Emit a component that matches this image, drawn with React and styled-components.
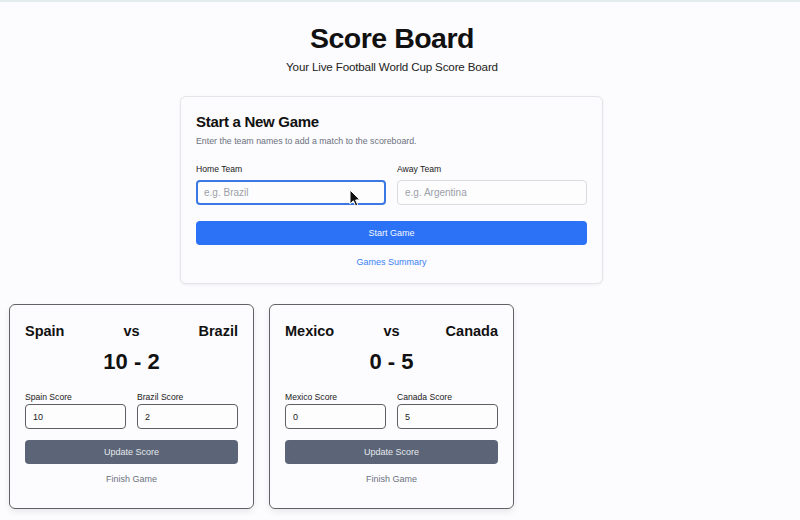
import React, { useState } from "react";
import styled, { createGlobalStyle, css } from "styled-components";

const GlobalStyle = createGlobalStyle`
  html, body {
    margin: 0;
    padding: 0;
    background: #fcfbfd;
  }
  body {
    font-family: "Liberation Sans", Arial, sans-serif;
    color: #111;
  }
  * { box-sizing: border-box; }
`;

const Page = styled.div`
  position: relative;
  width: 800px;
  min-height: 520px;
  border-top: 2px solid #e3eded;
  overflow: hidden;
`;

const Header = styled.header`
  width: 784px;
  display: flex;
  flex-direction: column;
  align-items: center;
  padding-top: 19px;
`;

const Title = styled.h1`
  margin: 0;
  font-size: 28.5px;
  line-height: 34px;
  font-weight: 700;
  letter-spacing: -0.5px;
  color: #111;
`;

const Subtitle = styled.p`
  margin: 5px 0 0;
  font-size: 11.6px;
  line-height: 14px;
  letter-spacing: -0.15px;
  color: #222;
`;

const FormCard = styled.section`
  width: 423px;
  margin: 22px 0 0 180px;
  padding: 16px 15px 15px;
  border: 1px solid #e4e5e9;
  border-radius: 6px;
  background: #fcfbfd;
  box-shadow: 0 1px 3px rgba(0, 0, 0, 0.06);
  display: flex;
  flex-direction: column;
`;

const FormTitle = styled.h2`
  margin: 0;
  font-size: 15px;
  line-height: 18px;
  font-weight: 700;
  letter-spacing: -0.3px;
  color: #111;
`;

const FormHint = styled.p`
  margin: 5px 0 0;
  font-size: 8.8px;
  line-height: 11px;
  color: #6b7280;
`;

const FieldRow = styled.div`
  display: grid;
  grid-template-columns: 1fr 1fr;
  gap: 11px;
  margin-top: ${(p) => p.$top}px;
`;

const Field = styled.label`
  display: flex;
  flex-direction: column;
  gap: ${(p) => p.$gap}px;
`;

const Label = styled.span`
  font-size: 8.6px;
  line-height: 11px;
  color: #222;
`;

const Input = styled.input`
  width: 100%;
  height: 25px;
  padding: 0 7px;
  border-radius: 4px;
  font-family: "Liberation Sans", Arial, sans-serif;
  font-size: ${(p) => (p.$dark ? "9px" : "10px")};
  color: #222;
  background: #fdfdfe;
  outline: none;
  border: 1px solid ${(p) => (p.$dark ? "#5f5f63" : "#d9dbe0")};
  &::placeholder {
    color: #9ca0a8;
  }
  ${(p) =>
    p.$focused &&
    css`
      border: 2px solid #3b78e6;
      padding: 0 6px;
    `}
`;

const Button = styled.button`
  width: 100%;
  height: 24px;
  margin-top: ${(p) => p.$top}px;
  border: none;
  border-radius: 4px;
  font-family: "Liberation Sans", Arial, sans-serif;
  font-size: 9px;
  cursor: pointer;
  background: ${(p) => (p.$variant === "slate" ? "#5b6577" : "#2b72f6")};
  color: ${(p) => (p.$variant === "slate" ? "#e6e8ec" : "#f4f7ff")};
`;

const TextLink = styled.button`
  align-self: center;
  margin-top: ${(p) => p.$top}px;
  padding: 0;
  border: none;
  background: none;
  font-family: "Liberation Sans", Arial, sans-serif;
  font-size: 9px;
  line-height: 12px;
  color: ${(p) => (p.$muted ? "#6b7280" : "#3b82f6")};
  cursor: pointer;
`;

const Games = styled.div`
  display: grid;
  grid-template-columns: repeat(auto-fill, 245px);
  gap: 15px;
  padding: 0 9px;
  margin-top: 20px;
`;

const GameCard = styled.article`
  padding: 18px 15px 23px;
  border: 1px solid #626266;
  border-radius: 6px;
  background: #fcfbfd;
  box-shadow: 0 3px 6px rgba(0, 0, 0, 0.08);
  display: flex;
  flex-direction: column;
`;

const Teams = styled.div`
  display: grid;
  grid-template-columns: 1fr auto 1fr;
  align-items: center;
  font-size: 14.5px;
  line-height: 17px;
  font-weight: 700;
  span:last-child {
    text-align: right;
  }
`;

const Score = styled.div`
  margin-top: 9px;
  text-align: center;
  font-size: 22px;
  line-height: 26px;
  font-weight: 700;
  color: #111;
`;

const Cursor = styled.svg`
  position: absolute;
  left: 349px;
  top: 187px;
  pointer-events: none;
`;

const games = [
  { id: 1, home: "Spain", away: "Brazil", homeScore: 10, awayScore: 2 },
  { id: 2, home: "Mexico", away: "Canada", homeScore: 0, awayScore: 5 },
];

const Game = ({ game }) => {
  const [homeScore, setHomeScore] = useState(String(game.homeScore));
  const [awayScore, setAwayScore] = useState(String(game.awayScore));
  return (
    <GameCard>
      <Teams>
        <span>{game.home}</span>
        <span>vs</span>
        <span>{game.away}</span>
      </Teams>
      <Score>
        {game.homeScore} - {game.awayScore}
      </Score>
      <FieldRow $top={17}>
        <Field $gap={1}>
          <Label>{game.home} Score</Label>
          <Input
            $dark
            value={homeScore}
            onChange={(e) => setHomeScore(e.target.value)}
          />
        </Field>
        <Field $gap={1}>
          <Label>{game.away} Score</Label>
          <Input
            $dark
            value={awayScore}
            onChange={(e) => setAwayScore(e.target.value)}
          />
        </Field>
      </FieldRow>
      <Button $variant="slate" $top={11}>
        Update Score
      </Button>
      <TextLink $muted $top={9}>
        Finish Game
      </TextLink>
    </GameCard>
  );
};

export default function App() {
  const [home, setHome] = useState("");
  const [away, setAway] = useState("");

  return (
    <Page>
      <GlobalStyle />
      <Header>
        <Title>Score Board</Title>
        <Subtitle>Your Live Football World Cup Score Board</Subtitle>
      </Header>

      <FormCard>
        <FormTitle>Start a New Game</FormTitle>
        <FormHint>Enter the team names to add a match to the scoreboard.</FormHint>
        <FieldRow $top={17}>
          <Field $gap={5}>
            <Label>Home Team</Label>
            <Input
              $focused
              autoFocus
              placeholder="e.g. Brazil"
              value={home}
              onChange={(e) => setHome(e.target.value)}
            />
          </Field>
          <Field $gap={5}>
            <Label>Away Team</Label>
            <Input
              placeholder="e.g. Argentina"
              value={away}
              onChange={(e) => setAway(e.target.value)}
            />
          </Field>
        </FieldRow>
        <Button $top={16}>Start Game</Button>
        <TextLink $top={11}>Games Summary</TextLink>
      </FormCard>

      <Games>
        {games.map((game) => (
          <Game key={game.id} game={game} />
        ))}
      </Games>

      <Cursor width="12" height="19" viewBox="0 0 12 19">
        <path
          d="M1 1 L1 15 L4.4 11.8 L6.6 17 L8.8 16 L6.6 11 L10.8 10.8 Z"
          fill="#111"
          stroke="#fff"
          strokeWidth="1"
          strokeLinejoin="round"
        />
      </Cursor>
    </Page>
  );
}
